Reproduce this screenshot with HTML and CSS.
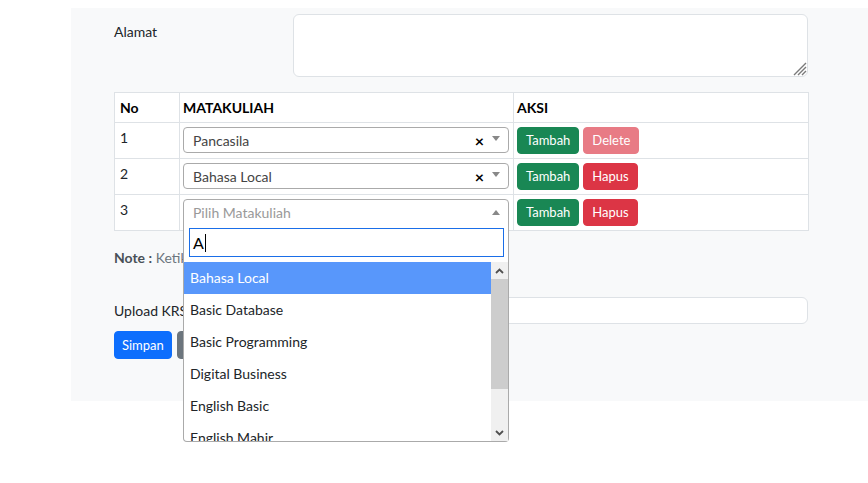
FILE: index.html
```html
<!DOCTYPE html>
<html lang="id">
<head>
<meta charset="utf-8">
<title>KRS</title>
<link rel="stylesheet" href="styles.css">
</head>
<body>
<div class="page">
  <div class="panel">
    <div class="form-row">
      <label class="form-label">Alamat</label>
      <div class="ta-wrap">
        <textarea class="textarea"></textarea>
        <svg class="grip" width="14" height="14" viewBox="0 0 14 14">
          <path d="M13 1 L1 13 M13 5 L5 13 M13 9 L9 13" stroke="#7a7a7a" stroke-width="1.4" fill="none"/>
        </svg>
      </div>
    </div>

    <table class="krs-table">
      <colgroup>
        <col class="c-no">
        <col class="c-mk">
        <col class="c-aksi">
      </colgroup>
      <thead>
        <tr><th>No</th><th>MATAKULIAH</th><th>AKSI</th></tr>
      </thead>
      <tbody>
        <tr>
          <td>1</td>
          <td>
            <div class="s2">
              <div class="s2-sel">
                <span class="s2-text">Pancasila</span>
                <span class="s2-clear">×</span>
                <span class="s2-arrow"></span>
              </div>
            </div>
          </td>
          <td><div class="acts"><button class="btn btn-green">Tambah</button><button class="btn btn-red disabled">Delete</button></div></td>
        </tr>
        <tr>
          <td>2</td>
          <td>
            <div class="s2">
              <div class="s2-sel">
                <span class="s2-text">Bahasa Local</span>
                <span class="s2-clear">×</span>
                <span class="s2-arrow"></span>
              </div>
            </div>
          </td>
          <td><div class="acts"><button class="btn btn-green">Tambah</button><button class="btn btn-red">Hapus</button></div></td>
        </tr>
        <tr>
          <td>3</td>
          <td>
            <div class="s2 open">
              <div class="s2-sel">
                <span class="s2-text placeholder">Pilih Matakuliah</span>
                <span class="s2-arrow up"></span>
              </div>
              <div class="s2-drop">
                <div class="s2-search"><div class="s2-field">A<span class="caret"></span></div></div>
                <div class="s2-results">
                  <ul class="s2-list">
                    <li class="hl">Bahasa Local</li>
                    <li>Basic Database</li>
                    <li>Basic Programming</li>
                    <li>Digital Business</li>
                    <li>English Basic</li>
                    <li>English Mahir</li>
                  </ul>
                  <div class="sb">
                    <div class="sb-btn"><svg width="9" height="6" viewBox="0 0 9 6"><path d="M1 5 L4.5 1.5 L8 5" fill="none" stroke="#505050" stroke-width="1.8"/></svg></div>
                    <div class="sb-thumb"></div>
                    <div class="sb-track"></div>
                    <div class="sb-btn"><svg width="9" height="6" viewBox="0 0 9 6"><path d="M1 1 L4.5 4.5 L8 1" fill="none" stroke="#505050" stroke-width="1.8"/></svg></div>
                  </div>
                </div>
              </div>
            </div>
          </td>
          <td><div class="acts"><button class="btn btn-green">Tambah</button><button class="btn btn-red">Hapus</button></div></td>
        </tr>
      </tbody>
    </table>

    <p class="note"><b>Note :</b> Ketik untuk mencari matakuliah</p>

    <div class="form-row upload">
      <label class="form-label mid">Upload KRS</label>
      <div class="file-box"></div>
    </div>

    <div class="btn-row">
      <button class="btn btn-blue">Simpan</button>
      <button class="btn btn-gray">Kembali</button>
    </div>
  </div>
</div>
</body>
</html>
```

FILE: styles.css
```css
* { box-sizing: border-box; }
html, body { margin: 0; background: #fff; }
body {
  font-family: "Segoe UI", Lato, "Noto Sans", sans-serif;
  font-size: 14px;
  line-height: 21px;
  color: #212529;
  min-height: 483px;
}
.page { padding: 8px 0 0 71px; min-height: 483px; }
.panel {
  width: 797px;
  background: #f8f9fa;
  padding: 6px 60px 42px 43px;
}
.form-row {
  display: grid;
  grid-template-columns: 179px 1fr;
}
.form-label { padding-top: 7px; }
.form-label.mid { padding-top: 0; align-self: center; }
.ta-wrap { position: relative; }
.textarea {
  display: block;
  width: 100%;
  height: 63px;
  border: 1px solid #dee2e6;
  border-radius: 6px;
  background: #fff;
  resize: none;
  margin: 0;
}
.grip { position: absolute; right: 1px; bottom: 1px; }
.krs-table {
  margin-top: 15px;
  width: 694px;
  table-layout: fixed;
  border-collapse: collapse;
  background: #fff;
}
.c-no { width: 65px; }
.c-mk { width: 334px; }
.c-aksi { width: 295px; }
.krs-table th, .krs-table td {
  border: 1px solid #dee2e6;
  padding: 4px 4px 4px 3px;
  text-align: left;
  vertical-align: top;
}
.krs-table th { font-weight: 700; color: #000; }
.krs-table th:first-child, .krs-table td:first-child { padding-left: 5px; }
.s2 { position: relative; width: 326px; }
.s2-sel {
  height: 26px;
  border: 1px solid #aaa;
  border-radius: 4px;
  background: #fff;
  display: flex;
  align-items: center;
  padding: 0 8px 0 9px;
}
.s2.open .s2-sel { border-bottom-left-radius: 0; border-bottom-right-radius: 0; }
.s2-text { flex: 1; color: #444; }
.s2-text.placeholder { color: #999; }
.s2-clear {
  font-weight: 700;
  font-size: 16px;
  color: #000;
  margin-right: 8px;
  margin-top: 1px;
}
.s2-arrow {
  width: 0; height: 0;
  border-left: 4px solid transparent;
  border-right: 4px solid transparent;
  border-top: 5px solid #888;
  margin-top: -4px;
}
.s2-arrow.up {
  border-top: 0;
  border-bottom: 5px solid #888;
  margin-top: 0;
}
.s2-drop {
  position: absolute;
  left: 0;
  top: 25px;
  width: 326px;
  background: #fff;
  border: 1px solid #aaa;
  border-top: 0;
  border-radius: 0 0 4px 4px;
  z-index: 10;
}
.s2-search { padding: 4px 4px 4px 5px; }
.s2-field {
  height: 29px;
  border: 1px solid #1a6ee8;
  padding: 3px 3px;
  color: #000;
  font-size: 16px;
  display: flex;
  align-items: center;
}
.caret { display: inline-block; width: 1px; height: 18px; background: #000; margin-left: 1px; }
.s2-results {
  display: flex;
  height: 179px;
  overflow: hidden;
  margin-top: 1px;
}
.s2-list {
  list-style: none;
  margin: 0;
  padding: 0;
  flex: 1;
}
.s2-list li {
  height: 32px;
  line-height: 20px;
  padding: 6px 6px;
  color: #212529;
}
.s2-list li.hl { background: #5897fb; color: #fff; }
.sb {
  width: 17px;
  display: flex;
  flex-direction: column;
  background: #f0f0f0;
}
.sb-btn {
  height: 17px;
  display: flex;
  align-items: center;
  justify-content: center;
  background: #f0f0f0;
}
.sb-thumb { height: 110px; background: #cdcdcd; }
.sb-track { flex: 1; }
.acts { display: flex; gap: 4px; }
.btn {
  font-family: inherit;
  font-size: 13px;
  line-height: 19px;
  height: 27px;
  padding: 3px 8px;
  border: 1px solid transparent;
  border-radius: 4px;
  color: #fff;
  cursor: pointer;
}
.btn-row .btn { height: 28px; padding: 3px 7px; }
.btn-green { background: #198754; border-color: #198754; }
.btn-red { background: #dc3545; border-color: #dc3545; }
.btn-red.disabled { opacity: 0.65; }
.btn-blue { background: #0d6efd; border-color: #0d6efd; }
.btn-gray { background: #6c757d; border-color: #6c757d; }
.note { margin: 16px 0 0; color: #6c757d; }
.note b { color: #495057; }
.upload { margin-top: 29px; }
.file-box {
  height: 27px;
  border: 1px solid #dee2e6;
  border-radius: 6px;
  background: #fff;
}
.btn-row { margin-top: 7px; display: flex; gap: 5px; }
```
